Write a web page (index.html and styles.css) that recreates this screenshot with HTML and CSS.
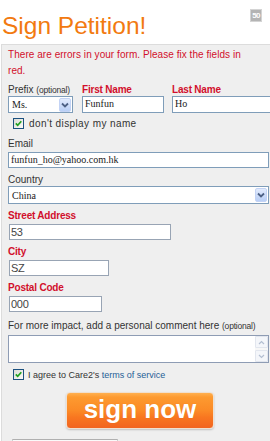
FILE: index.html
```html
<!DOCTYPE html>
<html>
<head>
<meta charset="utf-8">
<link rel="stylesheet" href="styles.css">
</head>
<body>
<div class="page">
  <div class="header">
    <h1 class="title">Sign Petition!</h1>
    <span class="count">50</span>
  </div>
  <div class="panel">
    <p class="error">There are errors in your form. Please fix the fields in red.</p>
    <div class="name-row">
      <div class="col col-prefix">
        <label class="lbl">Prefix <span class="opt">(optional)</span></label>
        <div class="select small">
          <span class="sel-text">Ms.</span>
          <span class="arrow"><svg width="8" height="6" viewBox="0 0 8 6"><path d="M1 1.5 L4 4.5 L7 1.5" fill="none" stroke="#4d6185" stroke-width="1.8"/></svg></span>
        </div>
      </div>
      <div class="col col-first">
        <label class="lbl req">First Name</label>
        <div class="input w-first">Funfun</div>
      </div>
      <div class="col col-last">
        <label class="lbl req">Last Name</label>
        <div class="input w-last">Ho</div>
      </div>
    </div>
    <div class="check-row">
      <span class="cb"><svg width="9" height="9" viewBox="0 0 9 9"><path d="M1.8 4.3 L3.7 6.3 L7.3 2.3" fill="none" stroke="#21a121" stroke-width="1.7"/></svg></span>
      <span class="check-text">don't display my name</span>
    </div>
    <div class="field f-email">
      <label class="lbl">Email</label>
      <div class="input w-full">funfun_ho@yahoo.com.hk</div>
    </div>
    <div class="field">
      <label class="lbl">Country</label>
      <div class="select w-full big">
        <span class="sel-text">China</span>
        <span class="arrow"><svg width="8" height="6" viewBox="0 0 8 6"><path d="M1 1.5 L4 4.5 L7 1.5" fill="none" stroke="#4d6185" stroke-width="1.8"/></svg></span>
      </div>
    </div>
    <div class="field">
      <label class="lbl req">Street Address</label>
      <div class="input plain w-street">53</div>
    </div>
    <div class="field">
      <label class="lbl req">City</label>
      <div class="input plain w-city">SZ</div>
    </div>
    <div class="field">
      <label class="lbl req">Postal Code</label>
      <div class="input plain w-postal">000</div>
    </div>
    <div class="field f-comment">
      <label class="lbl">For more impact, add a personal comment here <span class="opt">(optional)</span></label>
      <div class="textarea">
        <div class="scroll">
          <span class="sbtn"><svg width="7" height="5" viewBox="0 0 7 5"><path d="M1 4 L3.5 1.5 L6 4" fill="none" stroke="#b4bfd2" stroke-width="1.2"/></svg></span>
          <span class="sbtn"><svg width="7" height="5" viewBox="0 0 7 5"><path d="M1 1 L3.5 3.5 L6 1" fill="none" stroke="#b4bfd2" stroke-width="1.2"/></svg></span>
        </div>
      </div>
    </div>
    <div class="check-row agree">
      <span class="cb"><svg width="9" height="9" viewBox="0 0 9 9"><path d="M1.8 4.3 L3.7 6.3 L7.3 2.3" fill="none" stroke="#21a121" stroke-width="1.7"/></svg></span>
      <span class="agree-text">I agree to Care2's <a class="tos" href="#">terms of service</a></span>
    </div>
    <div class="btn-row">
      <button class="sign">sign now</button>
    </div>
    <div class="bottom-box"></div>
  </div>
</div>
</body>
</html>
```
FILE: styles.css
```css
* { box-sizing: border-box; }
html, body { margin: 0; padding: 0; background: #fff; }
body { font-family: "Liberation Sans", Arial, sans-serif; width: 270px; height: 441px; overflow: hidden; }
.page { width: 270px; }
.header { height: 44px; display: flex; justify-content: space-between; align-items: flex-start; }
.title { margin: 0; padding: 11px 0 0 2px; font-size: 24.5px; font-weight: normal; color: #f27a10; line-height: 30px; white-space: nowrap; }
.count { margin: 9px 8px 0 0; background: #b4b4b4; border: 1px solid #d4d4d4; color: #fff; font-size: 8px; font-weight: bold; width: 12px; height: 13px; line-height: 11px; text-align: center; letter-spacing: -0.6px; }
.panel { margin-left: 1px; background: #efefef; border-top: 1px solid #dcdcdc; border-left: 1px solid #dcdcdc; padding: 2px 0 0 6px; height: 400px; }
.error { margin: 0; color: #d20f2c; font-size: 10px; line-height: 16px; width: 248px; letter-spacing: 0.05px; }
.lbl { display: block; font-size: 10px; color: #333; line-height: 12px; white-space: nowrap; }
.lbl.req { color: #d20f2c; font-weight: bold; letter-spacing: -0.2px; }
.opt { font-size: 8.5px; letter-spacing: -0.2px; }
.name-row { display: flex; margin-top: 5px; }
.col-prefix { width: 74px; flex: none; }
.col-first { width: 90px; flex: none; }
.col-last { width: 100px; flex: none; }
.name-row .input, .name-row .select { margin-top: 0; height: 17px; }
.input { height: 16px; background: #fff; border: 1px solid #7f9db9; font-family: "Liberation Serif", "Times New Roman", serif; font-size: 10px; line-height: 14px; padding-left: 2px; color: #222; white-space: nowrap; overflow: hidden; margin-top: 2px; }
.input.plain { border-color: #98a4b4; font-family: "Liberation Sans", Arial, sans-serif; font-size: 11px; color: #444; padding-left: 1px; letter-spacing: -0.3px; }
.w-first { width: 82px; }
.w-last { width: 100px; }
.w-full { width: 261px; }
.w-street { width: 162px; margin-left: 1px; }
.w-city { width: 100px; margin-left: 1px; }
.w-postal { width: 93px; margin-left: 1px; }
.select { background: #fff; border: 1px solid #7f9db9; font-family: "Liberation Serif", "Times New Roman", serif; font-size: 10px; color: #222; display: flex; align-items: center; }
.select.small { width: 65px; }
.select.big { height: 18px; }
.sel-text { flex: 1; padding-left: 3px; }
.arrow { width: 12px; height: 14px; margin-right: 1px; background: linear-gradient(#e2ebfd, #b9cff6); border: 1px solid #c3d3f5; border-radius: 2px; display: flex; align-items: center; justify-content: center; }
.check-row { display: flex; align-items: center; margin: 5px 0 0 5px; height: 11px; }
.cb { flex: none; width: 11px; height: 11px; border: 1px solid #1c5180; background: linear-gradient(135deg, #dcdcd6, #fbfbf8); display: flex; align-items: center; justify-content: center; }
.check-text { margin-left: 5px; font-size: 10px; color: #333; letter-spacing: 0.4px; }
.field { margin-top: 6px; }
.f-email { margin-top: 9px; }
.f-comment { margin-top: 8px; }
.textarea { width: 261px; height: 28px; background: #fff; border: 1px solid #8e9cb4; margin-top: 3px; display: flex; justify-content: flex-end; }
.scroll { width: 13px; display: flex; flex-direction: column; justify-content: space-between; background: #f7f7f7; }
.sbtn { height: 12px; display: flex; align-items: center; justify-content: center; background: #f4f6fa; border: 1px solid #e2e6ee; border-radius: 1px; }
.agree { margin-top: 6px; }
.agree-text { margin-left: 4px; font-size: 9px; color: #333; white-space: nowrap; }
.tos { color: #1f5e96; text-decoration: none; }
.btn-row { padding-left: 58px; margin-top: 12px; }
.sign { display: block; width: 148px; height: 37px; border: 1px solid #f0e0d0; border-radius: 4px; background: linear-gradient(#ffb050 0%, #fd9a30 12%, #fb8a26 50%, #f87620 70%, #f26420 100%); color: #fff; font-family: "Liberation Sans", Arial, sans-serif; font-weight: bold; font-size: 26px; line-height: 30px; padding: 0 0 4px; box-shadow: 0 1px 2px rgba(0,0,0,0.2); text-shadow: 0 0 1px rgba(200,90,0,0.4); }
.bottom-box { margin: 10px 0 0 4px; width: 106px; height: 10px; border-top: 1px solid #b0b0b0; border-left: 1px solid #d0d0d0; border-right: 1px solid #d0d0d0; background: #fafafa; }
```
